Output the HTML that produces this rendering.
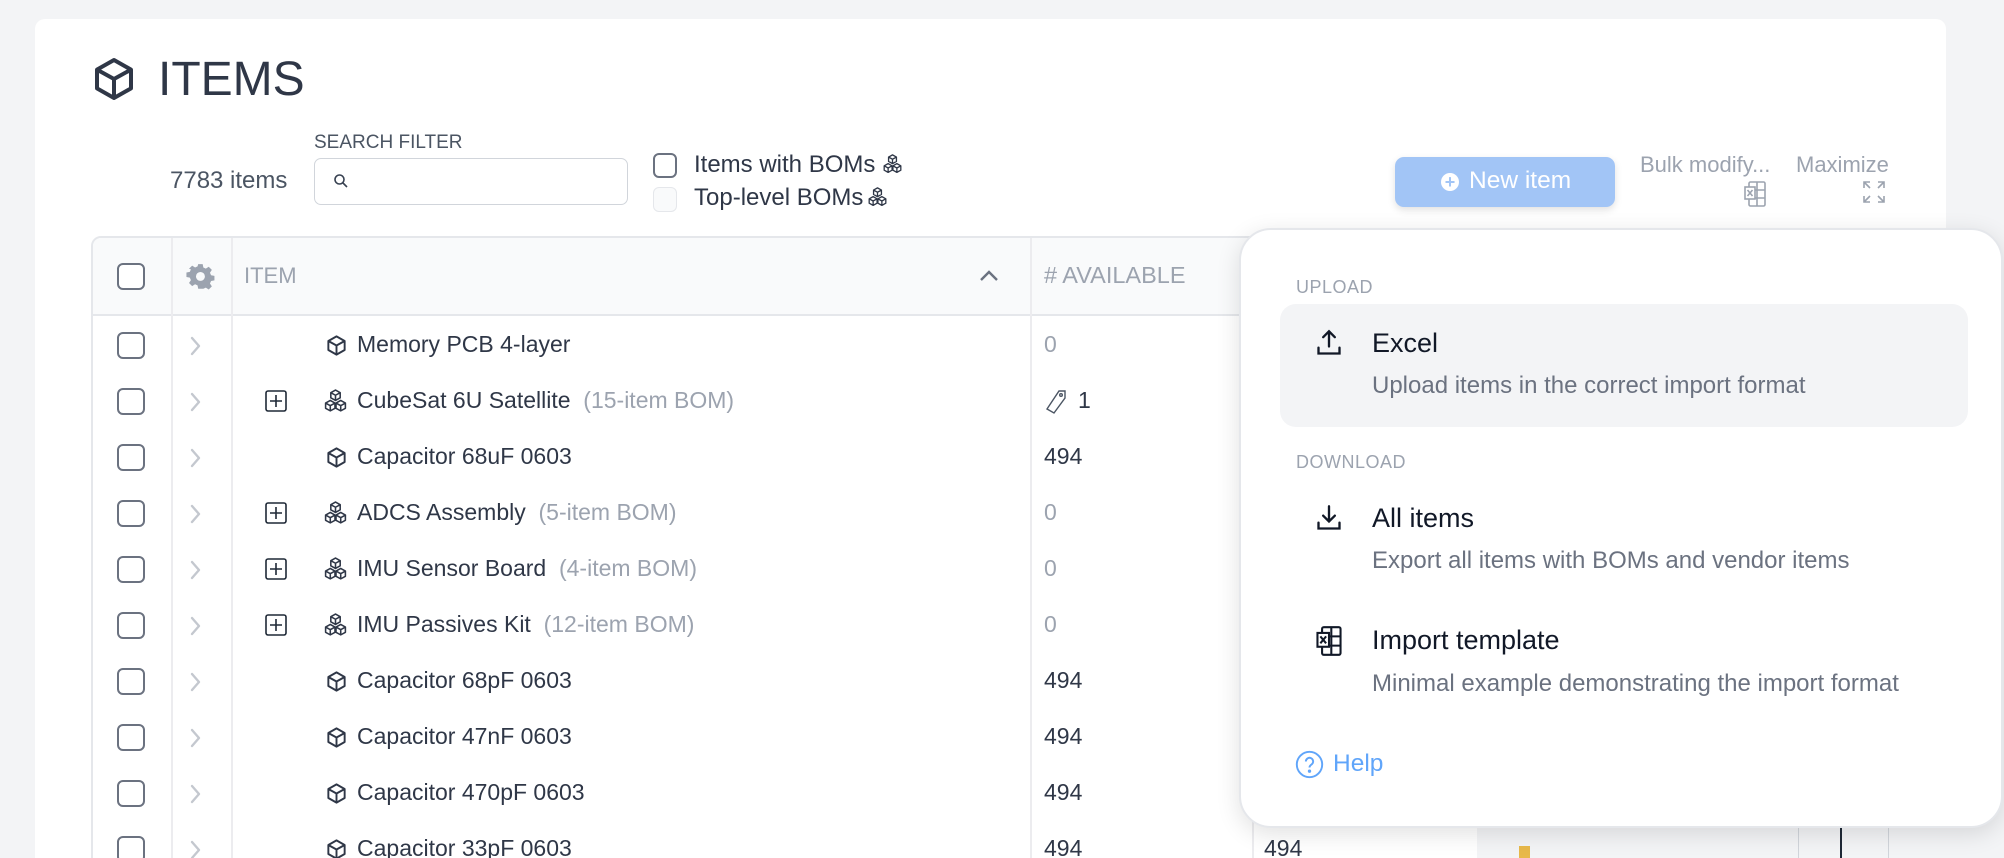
<!DOCTYPE html>
<html><head><meta charset="utf-8"><style>
*{box-sizing:border-box;margin:0;padding:0}
html,body{width:2004px;height:858px;overflow:hidden}
body{background:#f3f4f6;font-family:"Liberation Sans",sans-serif;position:relative;color:#2f3747}
.a{position:absolute}
.card{left:35px;top:19px;width:1911px;height:839px;background:#fff;border-radius:10px 10px 0 0}
.cb{position:absolute;width:28px;height:27px;border:2px solid #6b7280;border-radius:6px;background:#fff}
.t{position:absolute;white-space:nowrap}
.g{color:#9ca3af}
svg{position:absolute;overflow:visible}
</style></head><body>
<svg width="0" height="0" style="position:absolute"><defs>
<symbol id="cube" viewBox="0 0 24 24"><path fill="none" stroke="#2f3747" stroke-width="2" stroke-linejoin="round" d="M12 2.5l8.5 4.8v9.4L12 21.5l-8.5-4.8V7.3z M12 12l8.5-4.7 M12 12v9.5 M12 12L3.5 7.3"/></symbol>
<symbol id="cubes" viewBox="0 0 24 24"><g fill="none" stroke="#2f3747" stroke-width="1.5" stroke-linejoin="round"><path d="M12 1l4.5 2.5v5L12 11 7.5 8.5v-5z M12 6l4.5-2.5 M12 6v5 M12 6L7.5 3.5"/><path d="M7 11l4.5 2.5v5L7 21l-4.5-2.5v-5z M7 16l4.5-2.5 M7 16v5 M7 16l-4.5-2.5"/><path d="M17 11l4.5 2.5v5L17 21l-4.5-2.5v-5z M17 16l4.5-2.5 M17 16v5 M17 16l-4.5-2.5"/></g></symbol>
<symbol id="chev" viewBox="0 0 12 20"><path d="M2 2l7 8-7 8" fill="none" stroke="#c4c8cf" stroke-width="2.4" stroke-linecap="round" stroke-linejoin="round"/></symbol>
<symbol id="plus" viewBox="0 0 22 22"><g fill="none" stroke="#1f2937" stroke-width="1.6"><rect x="1" y="1" width="20" height="20" rx="2"/><path d="M11 5v12M5 11h12"/></g></symbol>
</defs></svg>
<div class="a card"></div>
<svg style="left:90px;top:54px" width="48" height="50"><use href="#cube"/></svg>
<div class="t" style="left:158px;top:52px;font-size:48px;color:#2f3747">ITEMS</div>
<div class="t" style="left:170px;top:167px;font-size:24px;color:#4b5563">7783 items</div>
<div class="t" style="left:314px;top:132px;font-size:19px;color:#4b5563">SEARCH FILTER</div>
<div class="a" style="left:314px;top:158px;width:314px;height:47px;border:1.5px solid #d1d5db;border-radius:7px"></div>
<svg style="left:333px;top:173px" width="16" height="16" viewBox="0 0 16 16" fill="none" stroke="#374151" stroke-width="1.6"><circle cx="6.5" cy="6.5" r="4.5"/><path d="M10 10l4 4"/></svg>
<div class="cb" style="left:653px;top:153px;width:24px;height:25px"></div>
<div class="cb" style="left:653px;top:187px;width:24px;height:25px;border-color:#e5e7eb;background:#f9fafb;border-width:1.5px"></div>
<div class="t" style="left:694px;top:151px;font-size:24px;color:#2f3747">Items with BOMs</div>
<svg style="left:882px;top:154px" width="21" height="21"><use href="#cubes"/></svg>
<div class="t" style="left:694px;top:184px;font-size:24px;color:#2f3747">Top-level BOMs</div>
<svg style="left:867px;top:187px" width="21" height="21"><use href="#cubes"/></svg>
<div class="a" style="left:1395px;top:157px;width:220px;height:50px;background:#a2c5f6;border-radius:9px;box-shadow:0 3px 8px rgba(0,0,0,.12)"></div>
<div class="a" style="left:1441px;top:173px;width:18px;height:18px;border-radius:50%;background:#fff;color:#a2c5f6;font-size:18px;line-height:18px;text-align:center;font-weight:bold">+</div>
<div class="t" style="left:1469px;top:167px;font-size:24.5px;color:#fff">New item</div>
<div class="t" style="left:1640px;top:152px;font-size:22px;color:#9ca3af">Bulk modify...</div>
<svg style="left:1743px;top:181px" width="24" height="26" viewBox="0 0 24 26" fill="none" stroke="#9ca3af" stroke-width="1.6"><rect x="6" y="1" width="16" height="24" rx="1.5"/><path d="M6 9h16M6 17h16M14 1v24"/><rect x="2" y="6" width="10" height="12" fill="#fff"/><path d="M4.5 9l5 6M9.5 9l-5 6"/></svg>
<div class="t" style="left:1796px;top:152px;font-size:22px;color:#9ca3af">Maximize</div>
<svg style="left:1862px;top:180px" width="24" height="24" viewBox="0 0 24 24" fill="none" stroke="#9ca3af" stroke-width="1.6"><path d="M2 8V2h6M2 2l6 6M22 8V2h-6M22 2l-6 6M2 16v6h6M2 22l6-6M22 16v6h-6M22 22l-6-6"/></svg>
<!-- table -->
<div class="a" style="left:91px;top:236px;width:1400px;height:640px;border:2px solid #e5e7eb;border-radius:10px;background:#fff"></div>
<div class="a" style="left:93px;top:238px;width:1396px;height:78px;background:#f9fafb;border-bottom:2px solid #e5e7eb;border-radius:8px 8px 0 0"></div>
<div class="a" style="left:171px;top:238px;width:2px;height:640px;background:#ececef"></div>
<div class="a" style="left:231px;top:238px;width:2px;height:640px;background:#ececef"></div>
<div class="a" style="left:1030px;top:238px;width:2px;height:640px;background:#ececef"></div>
<div class="a" style="left:1252px;top:238px;width:2px;height:640px;background:#ececef"></div>
<div class="cb" style="left:117px;top:263px"></div>
<svg style="left:187px;top:263px" width="28" height="28" viewBox="0 0 24 24"><path fill="#9ca3af" fill-rule="evenodd" d="M10 1h4l.6 3 2.2 1 2.6-1.7 2.8 2.8L20.5 8.7l1 2.2 3 .6v4l-3 .6-1 2.2 1.7 2.6-2.8 2.8-2.6-1.7-2.2 1L14 23h-4l-.6-3-2.2-1-2.6 1.7-2.8-2.8 1.7-2.6-1-2.2-3-.6v-4l3-.6 1-2.2L1.8 5.1 4.6 2.3l2.6 1.7 2.2-1zM12 8a4 4 0 100 8 4 4 0 000-8z" transform="scale(.96)"/></svg>
<div class="t" style="left:244px;top:263px;font-size:22px;color:#9ca3af">ITEM</div>
<svg style="left:979px;top:270px" width="20" height="12" viewBox="0 0 20 12" fill="none" stroke="#6b7280" stroke-width="2.4"><path d="M2 10l8-8 8 8"/></svg>
<div class="t" style="left:1044px;top:262px;font-size:23.5px;color:#9ca3af"># AVAILABLE</div>

<div class="cb" style="left:117px;top:332px"></div><svg style="left:190px;top:336px" width="12" height="20"><use href="#chev"/></svg>
<div class="cb" style="left:117px;top:388px"></div><svg style="left:190px;top:392px" width="12" height="20"><use href="#chev"/></svg>
<div class="cb" style="left:117px;top:444px"></div><svg style="left:190px;top:448px" width="12" height="20"><use href="#chev"/></svg>
<div class="cb" style="left:117px;top:500px"></div><svg style="left:190px;top:504px" width="12" height="20"><use href="#chev"/></svg>
<div class="cb" style="left:117px;top:556px"></div><svg style="left:190px;top:560px" width="12" height="20"><use href="#chev"/></svg>
<div class="cb" style="left:117px;top:612px"></div><svg style="left:190px;top:616px" width="12" height="20"><use href="#chev"/></svg>
<div class="cb" style="left:117px;top:668px"></div><svg style="left:190px;top:672px" width="12" height="20"><use href="#chev"/></svg>
<div class="cb" style="left:117px;top:724px"></div><svg style="left:190px;top:728px" width="12" height="20"><use href="#chev"/></svg>
<div class="cb" style="left:117px;top:780px"></div><svg style="left:190px;top:784px" width="12" height="20"><use href="#chev"/></svg>
<div class="cb" style="left:117px;top:836px"></div><svg style="left:190px;top:840px" width="12" height="20"><use href="#chev"/></svg>

<svg style="left:265px;top:390px" width="22" height="22"><use href="#plus"/></svg>
<svg style="left:265px;top:502px" width="22" height="22"><use href="#plus"/></svg>
<svg style="left:265px;top:558px" width="22" height="22"><use href="#plus"/></svg>
<svg style="left:265px;top:614px" width="22" height="22"><use href="#plus"/></svg>

<svg style="left:325px;top:334px" width="23" height="23"><use href="#cube"/></svg>
<svg style="left:323px;top:389px" width="25" height="25"><use href="#cubes"/></svg>
<svg style="left:325px;top:446px" width="23" height="23"><use href="#cube"/></svg>
<svg style="left:323px;top:501px" width="25" height="25"><use href="#cubes"/></svg>
<svg style="left:323px;top:557px" width="25" height="25"><use href="#cubes"/></svg>
<svg style="left:323px;top:613px" width="25" height="25"><use href="#cubes"/></svg>
<svg style="left:325px;top:670px" width="23" height="23"><use href="#cube"/></svg>
<svg style="left:325px;top:726px" width="23" height="23"><use href="#cube"/></svg>
<svg style="left:325px;top:782px" width="23" height="23"><use href="#cube"/></svg>
<svg style="left:325px;top:838px" width="23" height="23"><use href="#cube"/></svg>

<div style="position:absolute;left:0;top:0;font-size:23px;color:#2f3747">
<div class="t" style="left:357px;top:331px">Memory PCB 4-layer</div>
<div class="t" style="left:357px;top:387px">CubeSat 6U Satellite <span class="g">&nbsp;(15-item BOM)</span></div>
<div class="t" style="left:357px;top:443px">Capacitor 68uF 0603</div>
<div class="t" style="left:357px;top:499px">ADCS Assembly <span class="g">&nbsp;(5-item BOM)</span></div>
<div class="t" style="left:357px;top:555px">IMU Sensor Board <span class="g">&nbsp;(4-item BOM)</span></div>
<div class="t" style="left:357px;top:611px">IMU Passives Kit <span class="g">&nbsp;(12-item BOM)</span></div>
<div class="t" style="left:357px;top:667px">Capacitor 68pF 0603</div>
<div class="t" style="left:357px;top:723px">Capacitor 47nF 0603</div>
<div class="t" style="left:357px;top:779px">Capacitor 470pF 0603</div>
<div class="t" style="left:357px;top:835px">Capacitor 33pF 0603</div>
<div class="t g" style="left:1044px;top:331px">0</div>
<svg style="left:1045px;top:389px" width="22" height="26" viewBox="0 0 22 26" fill="none" stroke="#4b5563" stroke-width="1.4"><path d="M14 2h6v7L9 24 2 20z"/><circle cx="16" cy="6" r="1.3"/></svg>
<div class="t" style="left:1078px;top:387px">1</div>
<div class="t" style="left:1044px;top:443px">494</div>
<div class="t g" style="left:1044px;top:499px">0</div>
<div class="t g" style="left:1044px;top:555px">0</div>
<div class="t g" style="left:1044px;top:611px">0</div>
<div class="t" style="left:1044px;top:667px">494</div>
<div class="t" style="left:1044px;top:723px">494</div>
<div class="t" style="left:1044px;top:779px">494</div>
<div class="t" style="left:1044px;top:835px">494</div>
<div class="t" style="left:1264px;top:835px">494</div>
</div>
<div class="a" style="left:1477px;top:820px;width:470px;height:40px;background:#f3f4f6"></div>
<div class="a" style="left:1519px;top:846px;width:11px;height:14px;background:#e8b94a"></div>
<div class="a" style="left:1798px;top:820px;width:1px;height:40px;background:#d1d5db"></div>
<div class="a" style="left:1840px;top:820px;width:2px;height:40px;background:#1f2937"></div>
<div class="a" style="left:1888px;top:820px;width:1px;height:40px;background:#d1d5db"></div>
<!-- popup -->
<div class="a" style="left:1239px;top:228px;width:764px;height:600px;background:#fff;border:2px solid #e5e7eb;border-radius:32px;box-shadow:0 6px 24px rgba(0,0,0,.12)"></div>
<div class="t" style="left:1296px;top:277px;font-size:18px;color:#9ca3af;letter-spacing:.5px">UPLOAD</div>
<div class="a" style="left:1280px;top:304px;width:688px;height:123px;background:#f3f4f6;border-radius:16px"></div>
<svg style="left:1315px;top:329px" width="28" height="28" viewBox="0 0 24 24" fill="none" stroke="#111827" stroke-width="2" stroke-linecap="round"><path d="M12 15V2M7 7l5-5 5 5M3 16v5h18v-5"/></svg>
<div class="t" style="left:1372px;top:328px;font-size:27px;color:#111827">Excel</div>
<div class="t" style="left:1372px;top:372px;font-size:24px;color:#6b7280">Upload items in the correct import format</div>
<div class="t" style="left:1296px;top:452px;font-size:18px;color:#9ca3af;letter-spacing:.5px">DOWNLOAD</div>
<svg style="left:1315px;top:504px" width="28" height="28" viewBox="0 0 24 24" fill="none" stroke="#111827" stroke-width="2" stroke-linecap="round"><path d="M12 2v13M7 10l5 5 5-5M3 16v5h18v-5"/></svg>
<div class="t" style="left:1372px;top:503px;font-size:27px;color:#111827">All items</div>
<div class="t" style="left:1372px;top:547px;font-size:24px;color:#6b7280">Export all items with BOMs and vendor items</div>
<svg style="left:1315px;top:626px" width="28" height="30" viewBox="0 0 24 26" fill="none" stroke="#111827" stroke-width="1.8"><rect x="6" y="1" width="16" height="24" rx="1.5"/><path d="M6 9h16M6 17h16M14 1v24"/><rect x="2" y="6" width="10" height="12" fill="#fff"/><path d="M4.5 9l5 6M9.5 9l-5 6"/></svg>
<div class="t" style="left:1372px;top:625px;font-size:27px;color:#111827">Import template</div>
<div class="t" style="left:1372px;top:670px;font-size:24px;color:#6b7280">Minimal example demonstrating the import format</div>
<svg style="left:1295px;top:750px" width="29" height="29" viewBox="0 0 24 24" fill="none" stroke="#60a5fa" stroke-width="1.6"><circle cx="12" cy="12" r="10.5"/><path d="M9 9.5a3 3 0 115 2.2c-1.2.8-2 1.4-2 2.8"/><circle cx="12" cy="17.5" r=".6" fill="#60a5fa"/></svg>
<div class="t" style="left:1333px;top:750px;font-size:24.5px;color:#60a5fa">Help</div>
</body></html>
